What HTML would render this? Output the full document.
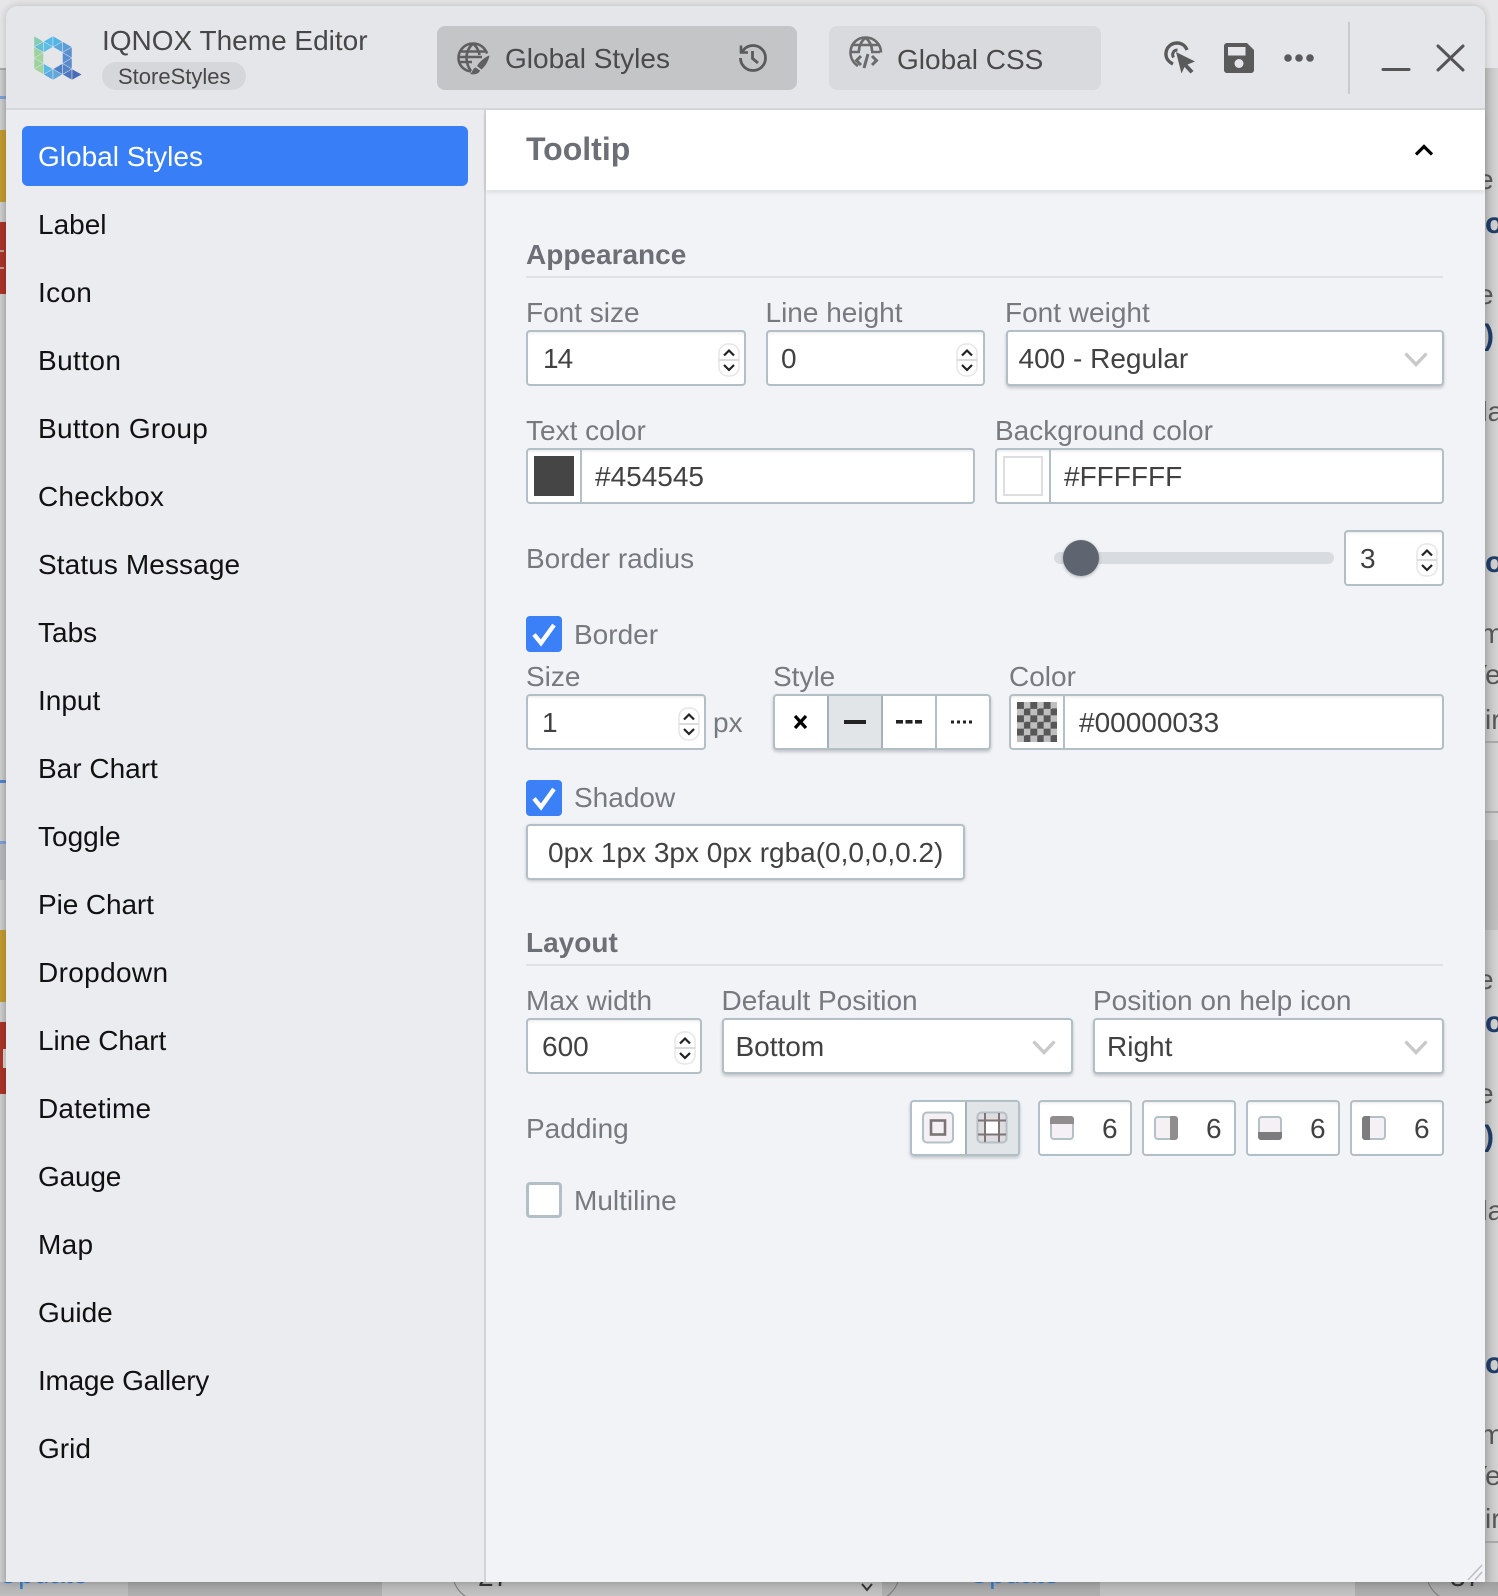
<!DOCTYPE html>
<html lang="en"><head><meta charset="utf-8"><title>IQNOX Theme Editor</title>
<style>
html,body{margin:0;padding:0}
body{width:1498px;height:1596px;position:relative;overflow:hidden;background:#c9c9c9;font-family:"Liberation Sans",Arial,sans-serif}
.a{position:absolute}
.t{position:absolute;font-size:28px;line-height:32px;white-space:nowrap;color:#414141}
.l{color:#76797e}
.h{color:#6c6f75;font-weight:700}
.n{color:#111;left:38px}
.b{position:absolute;box-sizing:border-box;border:2px solid #b3bfc6;border-radius:4px;background:#fff;box-shadow:inset 0 3px 3px -2px rgba(0,0,0,.1)}
.s{box-shadow:0 2px 3px rgba(0,0,0,.2)}
.ck{position:absolute;left:526px;width:36px;height:36px;border-radius:4px;background:#3b80f6}
svg{position:absolute;overflow:visible}
.bgf{position:absolute;font-size:28px;line-height:32px;color:#565656;white-space:nowrap}
.nv{color:#1f3c66;font-weight:700;font-size:30px}
</style></head><body>
<svg width="0" height="0" style="position:absolute"><defs>
<symbol id="sp" viewBox="0 0 22 34" overflow="visible"><rect x="1" y="1" width="20" height="32" rx="9" fill="#fff" stroke="#e6e6e6" stroke-width="1.5"/><path d="M1 17H21" stroke="#dcdcdc" stroke-width="2"/><path d="M6 12.500L11 7.500L16 12.500M6 22L11 27L16 22" fill="none" stroke="#222" stroke-width="2.200"/></symbol>
<symbol id="ch" viewBox="0 0 24 14" overflow="visible"><path d="M1.500 1.500L12 12.500L22.500 1.500" fill="none" stroke="#c9c9c9" stroke-width="3.400"/></symbol>
<symbol id="cm" viewBox="0 0 36 36" overflow="visible"><path d="M8 18.500L15 27L28 9" fill="none" stroke="#fff" stroke-width="4.400"/></symbol>
</defs></svg>

<!-- background fragments -->
<div class="a" style="left:0;top:0;width:1498px;height:68px;background:#e6e6e8"></div>
<div class="a" style="left:0;top:68px;width:6px;height:2px;background:#a9a9a9"></div>
<div class="a" style="left:0;top:70px;width:6px;height:1512px;background:linear-gradient(90deg,#cfcfcf,#bdbdbd)"></div>
<div class="a" style="left:0;top:96px;width:6px;height:3px;background:#7d9fd6"></div>
<div class="a" style="left:0;top:130px;width:6px;height:72px;background:#bf9a30"></div>
<div class="a" style="left:0;top:222px;width:6px;height:72px;background:#a83428"></div>
<div class="a" style="left:0;top:250px;width:4px;height:2px;background:#c09a90"></div>
<div class="a" style="left:0;top:267px;width:4px;height:2px;background:#c09a90"></div>
<div class="a" style="left:0;top:780px;width:6px;height:3px;background:#4b86cc"></div>
<div class="a" style="left:0;top:841px;width:6px;height:3px;background:#7d9fd6"></div>
<div class="a" style="left:0;top:844px;width:6px;height:36px;background:#b6b7bb"></div>
<div class="a" style="left:0;top:930px;width:6px;height:72px;background:#bf9a30"></div>
<div class="a" style="left:0;top:1022px;width:6px;height:72px;background:#a83428"></div>
<div class="a" style="left:3px;top:1049px;width:3px;height:19px;background:#d8d0cc"></div>
<div class="a" style="left:1485px;top:68px;width:13px;height:1528px;background:linear-gradient(90deg,#bcbcbc,#d4d4d4)"></div>
<div class="a" style="left:1485px;top:741px;width:13px;height:2px;background:#a8a8a8"></div>
<div class="a" style="left:1485px;top:811px;width:13px;height:2px;background:#a8a8a8"></div>
<div class="a" style="left:1485px;top:840px;width:13px;height:90px;background:linear-gradient(90deg,#aeaeae,#c2c2c2)"></div>
<div class="a" style="left:1485px;top:1541px;width:13px;height:2px;background:#a8a8a8"></div>
<div class="bgf" style="left:1478px;top:164px">e</div>
<div class="bgf nv" style="left:1485px;top:208px">o</div>
<div class="bgf" style="left:1478px;top:279px">e</div>
<div class="bgf nv" style="left:1484px;top:320px">)</div>
<div class="bgf" style="left:1472px;top:396px">da</div>
<div class="bgf nv" style="left:1485px;top:547px">o</div>
<div class="bgf" style="left:1480px;top:618px">m</div>
<div class="bgf" style="left:1469px;top:659px">Ye</div>
<div class="bgf" style="left:1485px;top:704px">ir</div>
<div class="bgf" style="left:1478px;top:964px">e</div>
<div class="bgf nv" style="left:1485px;top:1007px">o</div>
<div class="bgf" style="left:1478px;top:1078px">e</div>
<div class="bgf nv" style="left:1484px;top:1121px">)</div>
<div class="bgf" style="left:1472px;top:1195px">da</div>
<div class="bgf nv" style="left:1485px;top:1348px">o</div>
<div class="bgf" style="left:1480px;top:1419px">m</div>
<div class="bgf" style="left:1469px;top:1460px">Ye</div>
<div class="bgf" style="left:1485px;top:1503px">ir</div>
<div class="a" style="left:0;top:1582px;width:1498px;height:14px;background:linear-gradient(#9f9f9f,#b0b0b0);overflow:hidden">
 <div class="a" style="left:0;top:0;width:128px;height:14px;background:linear-gradient(#b0b0b0,#bdbdbd)"></div>
 <div class="a" style="left:382px;top:0;width:500px;height:14px;background:linear-gradient(#b5b5b5,#c2c2c2)"></div>
 <div class="a" style="left:1100px;top:0;width:255px;height:14px;background:linear-gradient(#b5b5b5,#c2c2c2)"></div>
 <div class="a" style="left:-2px;top:-24px;font-size:28px;line-height:32px;color:#2f78c8">Update</div>
 <div class="a" style="left:969px;top:-24px;font-size:28px;line-height:32px;color:#2f78c8">Update</div>
 <div class="a" style="left:478px;top:-21px;font-size:28px;line-height:32px;color:#333">27</div>
 <div class="a" style="left:1450px;top:-21px;font-size:28px;line-height:32px;color:#333">37</div>
 <div class="a" style="left:452px;top:-40px;width:448px;height:60px;border:1px solid #777;border-radius:30px;box-sizing:border-box"></div>
 <div class="a" style="left:1426px;top:-40px;width:200px;height:60px;border:1px solid #777;border-radius:30px;box-sizing:border-box"></div>
 <svg style="left:860px;top:0" width="14" height="10" fill="none" stroke="#333" stroke-width="2"><path d="M2 2L7 8L12 2"/></svg>
</div>

<!-- window -->
<div class="a" style="left:6px;top:6px;width:1479px;height:1576px;background:#f1f3f7;border-radius:12px 12px 0 0;overflow:hidden;box-shadow:0 0 8px rgba(0,0,0,.2)"></div>
<div class="a" style="left:6px;top:6px;width:1479px;height:102px;background:#e5e6ea;border-radius:12px 12px 0 0"></div>
<div class="a" style="left:6px;top:108px;width:1479px;height:2px;background:#d6d7da"></div>
<div class="a" style="left:6px;top:110px;width:478px;height:1472px;background:#ebecf0"></div>
<div class="a" style="left:484px;top:110px;width:2px;height:1472px;background:#d2d3d6"></div>
<div class="a" style="left:486px;top:110px;width:999px;height:80px;background:#fff;box-shadow:0 2px 5px rgba(0,0,0,.1)"></div>

<!-- logo -->
<svg style="left:0;top:0" width="100" height="100" stroke="#e5e6ea" stroke-width=".5">
<polygon points="34,36 43.5,41.5 34,47" fill="#86ccb2"/>
<polygon points="34,47 43.5,41.5 43.5,52.5" fill="#62c0d6"/>
<polygon points="43.5,41.5 53,36 53,47" fill="#56b8e8"/>
<polygon points="53,36 62.5,41.5 53,47" fill="#52b4e6"/>
<polygon points="43.5,41.5 53,47 43.5,52.5" fill="#5dbde2"/>
<polygon points="62.5,41.5 72,47 62.5,52.5" fill="#5b9dd8"/>
<polygon points="53,47 62.5,41.5 62.5,52.5" fill="#5aa6dc"/>
<polygon points="72,47 72,58 62.5,52.5" fill="#5a8fcf"/>
<polygon points="34,47 43.5,52.5 34,58" fill="#9cd2a0"/>
<polygon points="34,58 43.5,52.5 43.5,63.5" fill="#a2d39e"/>
<polygon points="34,58 43.5,63.5 34,69" fill="#9cd2a0"/>
<polygon points="34,69 43.5,63.5 43.5,74.5" fill="#a4d49d"/>
<polygon points="62.5,52.5 72,58 62.5,63.5" fill="#5a8fcf"/>
<polygon points="72,58 72,69 62.5,63.5" fill="#5a8acb"/>
<polygon points="62.5,63.5 72,69 62.5,74.5" fill="#5484c6"/>
<polygon points="43.5,63.5 53,69 43.5,74.5" fill="#5bb9e6"/>
<polygon points="43.5,74.5 53,69 53,80" fill="#5ba9dc"/>
<polygon points="53,69 62.5,74.5 53,80" fill="#62a6da"/>
<polygon points="53,69 62.5,63.5 62.5,74.5" fill="#4f7fc4"/>
<polygon points="62.5,74.5 72,69 72,80" fill="#4d76bd"/>
<polygon points="72,69 82,74.5 72,80" fill="#4a6ab5"/>
</svg>

<div class="t" style="left:102px;top:25px;font-size:28px;color:#474747">IQNOX Theme Editor</div>
<div class="a" style="left:102px;top:62px;width:144px;height:28px;border-radius:14px;background:#d6d7db"></div>
<div class="t" style="left:118px;top:61px;font-size:22px;color:#474747">StoreStyles</div>

<!-- tabs -->
<div class="a" style="left:437px;top:26px;width:360px;height:64px;border-radius:8px;background:#c4c5c7"></div>
<div class="a" style="left:829px;top:26px;width:272px;height:64px;border-radius:8px;background:#d9dadd"></div>
<div class="t" style="left:505px;top:43px;color:#4a4a4a">Global Styles</div>
<div class="t" style="left:897px;top:44px;color:#4a4a4a">Global CSS</div>
<!-- globe brush -->
<svg style="left:457px;top:42px" width="34" height="34" viewBox="0 0 34 34" fill="none" stroke="#5f5f5f" stroke-width="2.600">
<path d="M14 29.500C6.500 28.500 1.500 23 1.500 16C1.500 8 8 1.500 16 1.500C22.500 1.500 28 5.500 30 11.500"/>
<path d="M16 1.500C11 6 9.500 11 9.500 16C9.500 20.500 11 25 14 29"/><path d="M16 1.500C20 5 22 9 22.500 13"/>
<path d="M3.500 9.500H28M2 20H15M1.500 15H25"/>
<path d="M32.500 13.500C28 15 23 19 20 24L24.500 27.500C28.500 24 31.500 19 32.500 13.500Z" fill="#5f5f5f" stroke="none"/>
<path d="M18.500 25.500C15.500 26.500 15.500 30.500 13 32C17 33 22 32 23 28.500Z" fill="#5f5f5f" stroke="none"/>
</svg>
<!-- history -->
<svg style="left:738px;top:43px" width="30" height="30" viewBox="0 0 30 30" fill="none" stroke="#5a5a5a" stroke-width="2.800">
<path d="M4 9C6.500 5 10.500 2.500 15 2.500C22 2.500 27.500 8 27.500 15C27.500 22 22 27.500 15 27.500C8 27.500 2.500 22 2.500 15"/>
<path d="M3 2.500V9.500H10" stroke-width="2.600"/><path d="M14.500 8V15.500L20 20"/>
</svg>
<!-- globe code -->
<svg style="left:849px;top:36px" width="34" height="34" viewBox="0 0 34 34" fill="none" stroke="#6a6a6a" stroke-width="2.600">
<path d="M9 30C4.500 27 1.500 22 1.500 16.500C1.500 8 8 1.500 16.500 1.500C25 1.500 32 8 32 16.500"/>
<path d="M16.500 1.500C11.500 6 10 11 10 15M16.500 1.500C21.500 6 23 11 23 15M3.500 9H29.500M2 16H11M22 16H31"/>
<path d="M12 20L7.500 24.500L12 29M23 20L27.500 24.500L23 29M19 18L15 32" stroke-width="3"/>
</svg>
<!-- cursor -->
<svg style="left:1164px;top:41px" width="32" height="33" viewBox="0 0 32 33" fill="none" stroke="#5a5a5a" stroke-width="3.400">
<path d="M9 23C4 20.500 1.500 16.500 2 12C2.500 6 7.500 2 13 2C18 2 21.500 5 23 9"/>
<path d="M9.500 16.500C7.500 13 9.500 9 13.500 9" stroke-width="3"/>
<path d="M12 11L31 20.500L23.500 23.500L29.500 30L26.500 32.500L20.500 26L17.500 32.500Z" fill="#5a5a5a" stroke="none"/>
</svg>
<!-- save -->
<svg style="left:1224px;top:43px" width="30" height="30" viewBox="0 0 30 30">
<path d="M3 0H23L30 7V27C30 28.700 28.700 30 27 30H3C1.300 30 0 28.700 0 27V3C0 1.300 1.300 0 3 0Z" fill="#5a5a5a"/>
<rect x="4" y="4" width="17.500" height="8.500" fill="#e5e6ea"/><circle cx="15" cy="20.500" r="4.500" fill="#e5e6ea"/>
</svg>
<!-- dots -->
<svg style="left:1280px;top:50px" width="40" height="16" fill="#5a5a5a"><circle cx="8" cy="8" r="3.800"/><circle cx="19" cy="8" r="3.800"/><circle cx="30" cy="8" r="3.800"/></svg>
<div class="a" style="left:1348px;top:22px;width:2px;height:72px;background:#c9cacd"></div>
<svg style="left:1380px;top:40px" width="90" height="36" fill="none" stroke="#555" stroke-width="3" stroke-linecap="round"><path d="M3 29.500H29"/><path d="M58 6L83 30M83 6L58 30"/></svg>

<!-- sidebar -->
<div class="a" style="left:22px;top:126px;width:446px;height:60px;border-radius:6px;background:#387ef7"></div>
<div class="t" style="left:38px;top:141px;color:#fff">Global Styles</div>
<div class="t n" style="top:209px">Label</div>
<div class="t n" style="top:277px;letter-spacing:.3px">Icon</div>
<div class="t n" style="top:345px;letter-spacing:.4px">Button</div>
<div class="t n" style="top:413px;letter-spacing:.3px">Button Group</div>
<div class="t n" style="top:481px;letter-spacing:.2px">Checkbox</div>
<div class="t n" style="top:549px;letter-spacing:.1px">Status Message</div>
<div class="t n" style="top:617px">Tabs</div>
<div class="t n" style="top:685px">Input</div>
<div class="t n" style="top:753px">Bar Chart</div>
<div class="t n" style="top:821px">Toggle</div>
<div class="t n" style="top:889px;letter-spacing:-.1px">Pie Chart</div>
<div class="t n" style="top:957px;letter-spacing:.35px">Dropdown</div>
<div class="t n" style="top:1025px;letter-spacing:-.1px">Line Chart</div>
<div class="t n" style="top:1093px;letter-spacing:.15px">Datetime</div>
<div class="t n" style="top:1161px;letter-spacing:-.2px">Gauge</div>
<div class="t n" style="top:1229px;letter-spacing:.3px">Map</div>
<div class="t n" style="top:1297px">Guide</div>
<div class="t n" style="top:1365px;letter-spacing:-.25px">Image Gallery</div>
<div class="t n" style="top:1433px">Grid</div>

<!-- content header -->
<div class="t h" style="left:526px;top:131px;font-size:32px;line-height:36px">Tooltip</div>
<svg style="left:1414px;top:144px" width="20" height="12" fill="none" stroke="#000" stroke-width="3.200"><path d="M2 10.500L10 2.500L18 10.500"/></svg>

<!-- appearance -->
<div class="t h" style="left:526px;top:239px">Appearance</div>
<div class="a" style="left:526px;top:276px;width:917px;height:2px;background:#dfe1e4"></div>
<div class="t l" style="left:526px;top:297px">Font size</div>
<div class="t l" style="left:765.5px;top:297px">Line height</div>
<div class="t l" style="left:1005px;top:297px">Font weight</div>
<div class="b" style="left:526px;top:330px;width:220px;height:56px"></div>
<div class="t" style="left:543px;top:343px;letter-spacing:-1px">14</div>
<svg style="left:718px;top:343px" width="22" height="34"><use href="#sp"/></svg>
<div class="b" style="left:766px;top:330px;width:219px;height:56px"></div>
<div class="t" style="left:781px;top:343px">0</div>
<svg style="left:956px;top:343px" width="22" height="34"><use href="#sp"/></svg>
<div class="b s" style="left:1005.5px;top:330px;width:438px;height:56px"></div>
<div class="t" style="left:1018.500px;top:343px">400 - Regular</div>
<svg style="left:1404px;top:352px" width="24" height="14"><use href="#ch"/></svg>

<div class="t l" style="left:526px;top:415px">Text color</div>
<div class="t l" style="left:995px;top:415px">Background color</div>
<div class="b" style="left:526px;top:448px;width:449px;height:56px"></div>
<div class="a" style="left:580px;top:450px;width:2px;height:52px;background:#b3bfc6"></div>
<div class="a" style="left:534px;top:456px;width:40px;height:40px;background:#454545"></div>
<div class="t" style="left:595px;top:461px">#454545</div>
<div class="b" style="left:995px;top:448px;width:449px;height:56px"></div>
<div class="a" style="left:1049px;top:450px;width:2px;height:52px;background:#b3bfc6"></div>
<div class="a" style="left:1003px;top:456px;width:40px;height:40px;background:#fff;border:2px solid #dedede;box-sizing:border-box"></div>
<div class="t" style="left:1064px;top:461px">#FFFFFF</div>

<div class="t l" style="left:526px;top:543px">Border radius</div>
<div class="a" style="left:1054px;top:552px;width:280px;height:12px;border-radius:6px;background:#d8dbdf"></div>
<div class="a" style="left:1063px;top:540px;width:36px;height:36px;border-radius:50%;background:#5f6570;box-shadow:0 1px 3px rgba(0,0,0,.3)"></div>
<div class="b" style="left:1344px;top:530px;width:100px;height:56px"></div>
<div class="t" style="left:1360px;top:543px">3</div>
<svg style="left:1416px;top:543px" width="22" height="34"><use href="#sp"/></svg>

<!-- border -->
<div class="ck" style="top:616px"><svg style="left:0;top:0" width="36" height="36"><use href="#cm"/></svg></div>
<div class="t l" style="left:574px;top:619px">Border</div>
<div class="t l" style="left:526px;top:660.5px">Size</div>
<div class="t l" style="left:773px;top:660.5px">Style</div>
<div class="t l" style="left:1009px;top:660.5px">Color</div>
<div class="b" style="left:526px;top:694px;width:180px;height:56px"></div>
<div class="t" style="left:542px;top:707px">1</div>
<svg style="left:678px;top:707px" width="22" height="34"><use href="#sp"/></svg>
<div class="t l" style="left:713px;top:707px">px</div>
<div class="b s" style="left:773px;top:694px;width:218px;height:56px;overflow:hidden">
 <div class="a" style="left:52px;top:0;width:56px;height:52px;background:#e1e5e8;border-left:2px solid #a4b1b9;border-right:2px solid #a4b1b9;box-sizing:border-box"></div>
 <div class="a" style="left:160px;top:0;width:2px;height:52px;background:#b3bfc6"></div>
</div>
<svg style="left:790px;top:712px" width="200" height="20">
<path d="M5 4L16 16M16 4L5 16" stroke="#000" stroke-width="3.200" fill="none"/>
<rect x="54" y="8" width="22" height="4" fill="#222"/>
<rect x="106" y="8" width="7" height="3.600" fill="#222"/><rect x="115.500" y="8" width="7" height="3.600" fill="#222"/><rect x="125" y="8" width="7" height="3.600" fill="#222"/>
<rect x="161" y="8.500" width="3" height="3" fill="#222"/><rect x="167" y="8.500" width="3" height="3" fill="#222"/><rect x="173" y="8.500" width="3" height="3" fill="#222"/><rect x="179" y="8.500" width="3" height="3" fill="#222"/>
</svg>
<div class="b" style="left:1009px;top:694px;width:435px;height:56px"></div>
<div class="a" style="left:1063px;top:696px;width:2px;height:52px;background:#b3bfc6"></div>
<div class="a" style="left:1017px;top:702px;width:40px;height:40px;background:conic-gradient(#bfbfbf 25%,#575757 0 50%,#bfbfbf 0 75%,#575757 0) 0 0/13.34px 13.34px"></div>
<div class="t" style="left:1079px;top:707px">#00000033</div>

<!-- shadow -->
<div class="ck" style="top:780px"><svg style="left:0;top:0" width="36" height="36"><use href="#cm"/></svg></div>
<div class="t l" style="left:574px;top:782px">Shadow</div>
<div class="b s" style="left:526px;top:824px;width:439px;height:56px;box-shadow:0 1px 3px rgba(0,0,0,.2)"></div>
<div class="t" style="left:548px;top:837px">0px 1px 3px 0px rgba(0,0,0,0.2)</div>

<!-- layout -->
<div class="t h" style="left:526px;top:927px">Layout</div>
<div class="a" style="left:526px;top:964px;width:917px;height:2px;background:#dfe1e4"></div>
<div class="t l" style="left:526px;top:985px">Max width</div>
<div class="t l" style="left:721.5px;top:985px">Default Position</div>
<div class="t l" style="left:1093px;top:985px">Position on help icon</div>
<div class="b" style="left:526px;top:1018px;width:176px;height:56px"></div>
<div class="t" style="left:542px;top:1031px">600</div>
<svg style="left:674px;top:1031px" width="22" height="34"><use href="#sp"/></svg>
<div class="b s" style="left:722px;top:1018px;width:351px;height:56px"></div>
<div class="t" style="left:735.5px;top:1031px">Bottom</div>
<svg style="left:1032px;top:1040px" width="24" height="14"><use href="#ch"/></svg>
<div class="b s" style="left:1093px;top:1018px;width:351px;height:56px"></div>
<div class="t" style="left:1107px;top:1031px">Right</div>
<svg style="left:1404px;top:1040px" width="24" height="14"><use href="#ch"/></svg>

<!-- padding -->
<div class="t l" style="left:526px;top:1113px">Padding</div>
<div class="b s" style="left:910px;top:1100px;width:110px;height:56px;overflow:hidden">
 <div class="a" style="left:53px;top:0;width:55px;height:52px;background:#e1e5e8;border-left:2px solid #a4b1b9;box-sizing:border-box"></div>
</div>
<svg style="left:911px;top:1100px" width="108" height="55">
<rect x="12" y="12.500" width="30" height="30" rx="4" fill="#f4f0f3" stroke="#b4c0c7" stroke-width="2"/>
<rect x="20" y="20.500" width="14" height="14" fill="none" stroke="#7b7576" stroke-width="2.600"/>
<rect x="66.500" y="12.500" width="29" height="30" rx="4" fill="#dfdcdf" stroke="#b4c0c7" stroke-width="2"/>
<rect x="74" y="20.500" width="14" height="14" fill="#fff"/>
<path d="M74 13V42M88 13V42M67 20.500H95M67 34.500H95" stroke="#7b7576" stroke-width="2" fill="none"/>
</svg>
<div class="b" style="left:1038px;top:1100px;width:94px;height:56px"></div>
<div class="b" style="left:1142px;top:1100px;width:94px;height:56px"></div>
<div class="b" style="left:1246px;top:1100px;width:94px;height:56px"></div>
<div class="b" style="left:1350px;top:1100px;width:94px;height:56px"></div>
<svg style="left:1050px;top:1116px" width="24" height="24"><rect x="1" y="1" width="22" height="22" rx="3" fill="#f4f0f3" stroke="#b4c0c7" stroke-width="2"/><path d="M3 0H21A3 3 0 0 1 24 3V8H0V3A3 3 0 0 1 3 0Z" fill="#918c8e"/></svg>
<svg style="left:1154px;top:1116px" width="24" height="24"><rect x="1" y="1" width="22" height="22" rx="3" fill="#f4f0f3" stroke="#b4c0c7" stroke-width="2"/><path d="M16 0H21A3 3 0 0 1 24 3V21A3 3 0 0 1 21 24H16Z" fill="#918c8e"/></svg>
<svg style="left:1258px;top:1116px" width="24" height="24"><rect x="1" y="1" width="22" height="22" rx="3" fill="#f4f0f3" stroke="#b4c0c7" stroke-width="2"/><path d="M0 16H24V21A3 3 0 0 1 21 24H3A3 3 0 0 1 0 21Z" fill="#7c7c7e"/></svg>
<svg style="left:1362px;top:1116px" width="24" height="24"><rect x="1" y="1" width="22" height="22" rx="3" fill="#f4f0f3" stroke="#b4c0c7" stroke-width="2"/><path d="M8 0H3A3 3 0 0 0 0 3V21A3 3 0 0 0 3 24H8Z" fill="#7c7b7d"/></svg>
<div class="t" style="left:1102px;top:1113px">6</div>
<div class="t" style="left:1206px;top:1113px">6</div>
<div class="t" style="left:1310px;top:1113px">6</div>
<div class="t" style="left:1414px;top:1113px">6</div>

<!-- multiline -->
<div class="a" style="left:526px;top:1182px;width:36px;height:36px;box-sizing:border-box;border:3px solid #b3bfc6;border-radius:4px;background:#fff"></div>
<div class="t l" style="left:574px;top:1185px">Multiline</div>

<!-- grip -->
<svg style="left:1466px;top:1562px" width="18" height="20" fill="none" stroke="#bdbdbd" stroke-width="1.500"><path d="M2 18L16 3M9 18L16 10"/></svg>
</body></html>
